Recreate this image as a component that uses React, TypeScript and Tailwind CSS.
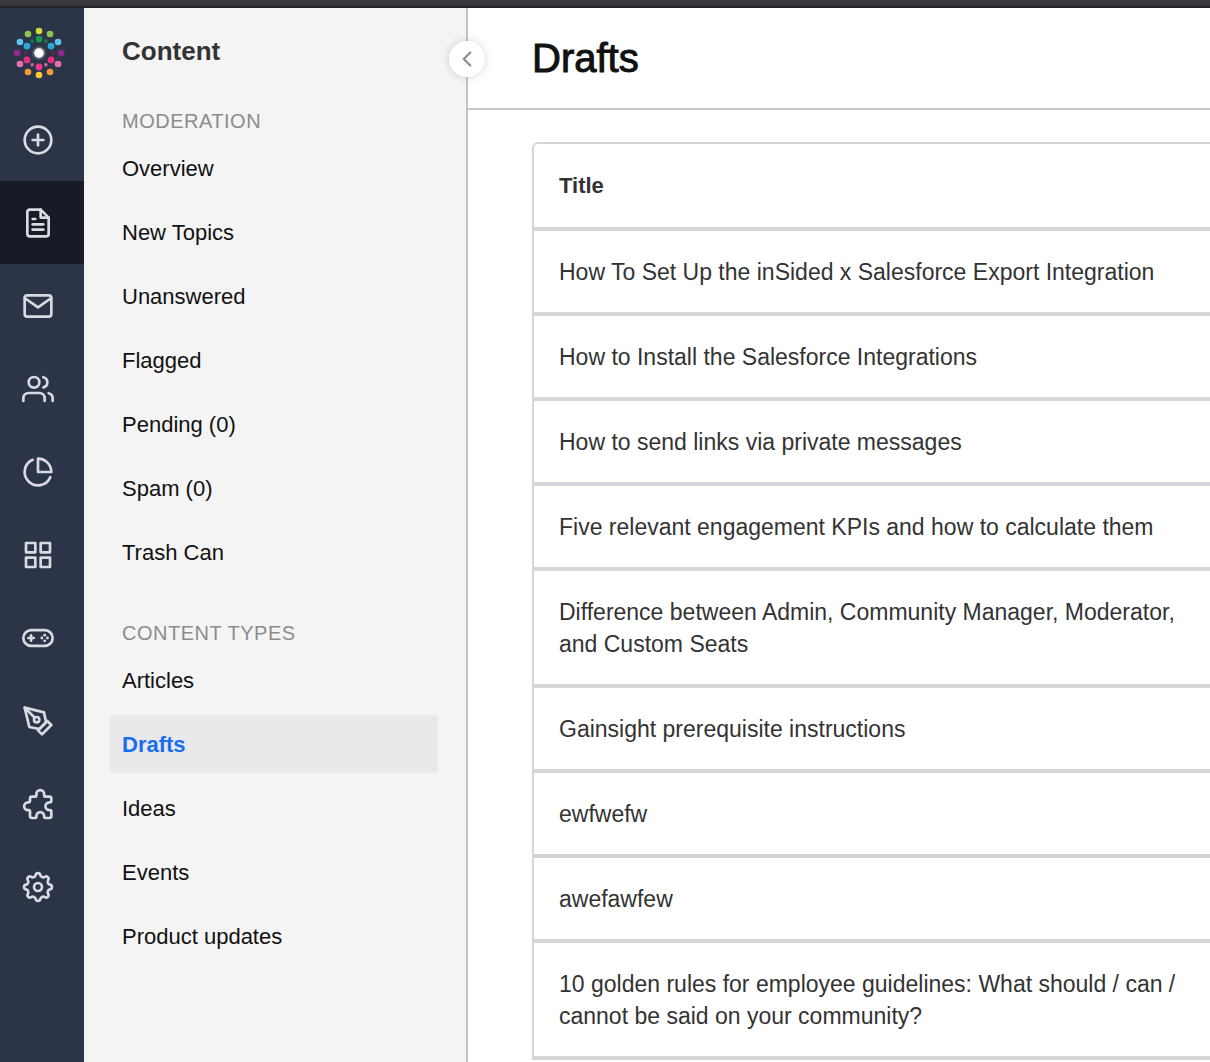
import type { ReactNode } from 'react'
import {
  FiChevronLeft,
  FiFileText,
  FiGrid,
  FiMail,
  FiPenTool,
  FiPieChart,
  FiPlusCircle,
  FiUsers,
} from 'react-icons/fi'
import clsx from 'clsx'

function Logo() {
  const outer = ['#cfdc3c', '#8fc650', '#5cc5f0', '#8e2a8c', '#e272ad', '#f7983a', '#fdcb35', '#f7983a', '#e272ad', '#8e2a8c', '#5cc5f0', '#8fc650']
  const middle = ['#149a4a', '#2ea6de', '#e82c86', '#e93a8d', '#e82c86', '#2ea6de']
  const small = ['#1d7a50', '#6d1d57', '#c06a9c', '#c06a9c', '#6d1d57', '#1d7a50']

  const ring = (colors: string[], radius: number, size: number, offset: number) =>
    colors.map((color, i) => {
      const angle = ((i * 360) / colors.length + offset) * (Math.PI / 180)
      return (
        <circle key={i} cx={26 + radius * Math.sin(angle)} cy={26 - radius * Math.cos(angle)} r={size} fill={color} />
      )
    })

  return (
    <svg viewBox="0 0 52 52" className="size-13" aria-hidden="true">
      {ring(outer, 22, 3.3, 0)}
      {ring(middle, 13.9, 3.4, 0)}
      {ring(small, 13.7, 1.8, 30)}
      <circle cx="26" cy="26" r="7.2" fill="#434b5c" />
      <circle cx="26" cy="26" r="5.8" fill="#747b88" />
      <circle cx="26" cy="26" r="4.7" fill="#fff" />
    </svg>
  )
}

function LineIcon({ children }: { children: ReactNode }) {
  return (
    <svg
      viewBox="0 0 24 24"
      fill="none"
      stroke="currentColor"
      strokeWidth="2"
      strokeLinecap="round"
      strokeLinejoin="round"
      className="size-8"
      aria-hidden="true"
    >
      {children}
    </svg>
  )
}

function GamepadIcon() {
  return (
    <LineIcon>
      <rect x="1" y="6.1" width="22" height="11.8" rx="5.9" />
      <path d="M6.8 10v4M4.8 12h4" />
      <g fill="currentColor" stroke="none">
        <circle cx="17" cy="9.9" r="1.05" />
        <circle cx="17" cy="14.1" r="1.05" />
        <circle cx="14.9" cy="12" r="1.05" />
        <circle cx="19.1" cy="12" r="1.05" />
      </g>
    </LineIcon>
  )
}

function PuzzleIcon() {
  return (
    <LineIcon>
      <path d="M6 8a1.5 1.5 0 0 1 1.5-1.5H10c.6 0 .8-.3.8-.9V4.5a2.9 2.9 0 0 1 5.8 0v1.1c0 .6.2.9.8.9h3.1a1.5 1.5 0 0 1 1.5 1.5v2c0 .6-.3.8-.9.8h-.6a2.9 2.9 0 0 0 0 5.8h.6c.6 0 .9.2.9.8V21a1.5 1.5 0 0 1-1.5 1.5h-3.1c-.6 0-.8-.3-.8-.9V21a2.9 2.9 0 0 0-5.8 0v.6c0 .6-.2.9-.8.9H7.5A1.5 1.5 0 0 1 6 21v-3.5c0-.6-.3-.9-.9-.9h-.6a2.9 2.9 0 0 1 0-5.8h.6c.6 0 .9-.2.9-.8z" />
    </LineIcon>
  )
}

function GearIcon() {
  // eight round teeth, joined by shallower valleys
  const point = (degrees: number) => {
    const angle = degrees * (Math.PI / 180)
    return `${(12 + 9.2 * Math.sin(angle)).toFixed(2)} ${(12 - 9.2 * Math.cos(angle)).toFixed(2)}`
  }
  const teeth = Array.from({ length: 8 }, (_, i) => {
    const center = i * 45
    return `A1.8 1.8 0 0 1 ${point(center + 11)}A2.2 2.2 0 0 0 ${point(center + 34)}`
  })
  return (
    <LineIcon>
      <path d={`M${point(-11)}${teeth.join('')}Z`} />
      <circle cx="12" cy="12" r="3" />
    </LineIcon>
  )
}

const railItems = [
  { label: 'Create', icon: <FiPlusCircle className="size-8" /> },
  { label: 'Content', icon: <FiFileText className="size-8" />, active: true },
  { label: 'Messages', icon: <FiMail className="size-8" /> },
  { label: 'Users', icon: <FiUsers className="size-8" /> },
  { label: 'Analytics', icon: <FiPieChart className="size-8" /> },
  { label: 'Apps', icon: <FiGrid className="size-8" /> },
  { label: 'Gamification', icon: <GamepadIcon /> },
  { label: 'Customization', icon: <FiPenTool className="size-8" /> },
  { label: 'Integrations', icon: <PuzzleIcon /> },
  { label: 'Settings', icon: <GearIcon /> },
]

const moderation = ['Overview', 'New Topics', 'Unanswered', 'Flagged', 'Pending (0)', 'Spam (0)', 'Trash Can']
const contentTypes = ['Articles', 'Drafts', 'Ideas', 'Events', 'Product updates']

const drafts = [
  'How To Set Up the inSided x Salesforce Export Integration',
  'How to Install the Salesforce Integrations',
  'How to send links via private messages',
  'Five relevant engagement KPIs and how to calculate them',
  'Difference between Admin, Community Manager, Moderator, and Custom Seats',
  'Gainsight prerequisite instructions',
  'ewfwefw',
  'awefawfew',
  '10 golden rules for employee guidelines: What should / can / cannot be said on your community?',
]

function NavSection({ title, items, active }: { title: string; items: string[]; active?: string }) {
  return (
    <section>
      <h3 className="px-3 text-[20px] leading-6 tracking-wide text-[#8c8c8c] uppercase">{title}</h3>
      <ul className="mt-1.5 flex flex-col gap-1.5">
        {items.map((item) => (
          <li key={item}>
            <a
              href="#"
              className={clsx(
                'flex h-[58px] items-center rounded px-3 text-[22px]',
                item === active ? 'bg-[#e9e9eb] font-bold text-[#1a6df0]' : 'text-[#111]',
              )}
            >
              {item}
            </a>
          </li>
        ))}
      </ul>
    </section>
  )
}

export default function App() {
  return (
    <div className="flex min-h-screen flex-col bg-white font-['Liberation_Sans',Arial,sans-serif]">
      <div className="h-2 border-b-2 border-[#242425] bg-[#37383d]" />

      <div className="flex flex-1">
        {/* Icon rail */}
        <nav aria-label="Main" className="w-21 shrink-0 bg-[#2c3547] text-[#d8dbe1]">
          <a href="#" aria-label="Home" className="flex h-[90px] justify-center pt-[19px] pr-1.5">
            <Logo />
          </a>
          {railItems.map((item) => (
            <a
              key={item.label}
              href="#"
              aria-label={item.label}
              className={clsx('flex h-[83px] items-center justify-center pr-2', item.active && 'bg-[#171b25]')}
            >
              {item.icon}
            </a>
          ))}
        </nav>

        {/* Content menu */}
        <aside className="relative w-96 shrink-0 border-r-2 border-[#c4c4c4] bg-[#f4f4f4] pr-7 pl-[26px]">
          <h2 className="px-3 pt-[27px] text-[26px] leading-8 font-bold text-[#333]">Content</h2>
          <div className="mt-[42px] flex flex-col gap-10">
            <NavSection title="Moderation" items={moderation} />
            <NavSection title="Content types" items={contentTypes} active="Drafts" />
          </div>
          <button
            type="button"
            aria-label="Collapse menu"
            className="absolute top-[33px] -right-[19px] flex size-9 items-center justify-center rounded-full bg-white text-[#8b8b95] shadow-[0_0_8px_rgba(0,0,0,0.16)]"
          >
            <FiChevronLeft className="size-[26px]" />
          </button>
        </aside>

        {/* Drafts list */}
        <main className="min-w-0 flex-1">
          <header className="flex h-[102px] items-center border-b-2 border-[#c8c8ca] px-16">
            <h1 className="text-[40px] font-normal text-[#111] [-webkit-text-stroke:1px_#111]">Drafts</h1>
          </header>
          <div className="pt-8 pl-16">
            <div className="rounded-tl-md border-t-2 border-l-2 border-[#d5d5da]">
              <table className="w-full text-left text-[23px] leading-8 text-[#333]">
                <thead>
                  <tr className="border-b-4 border-[#d5d5da]">
                    <th className="px-[25px] pt-[26px] pb-[25px] text-[22px] font-bold">Title</th>
                  </tr>
                </thead>
                <tbody>
                  {drafts.map((title) => (
                    <tr key={title} className="border-b-4 border-[#d5d5da]">
                      <td className="px-[25px] pt-[25px] pb-6">{title}</td>
                    </tr>
                  ))}
                </tbody>
              </table>
            </div>
          </div>
        </main>
      </div>
    </div>
  )
}
